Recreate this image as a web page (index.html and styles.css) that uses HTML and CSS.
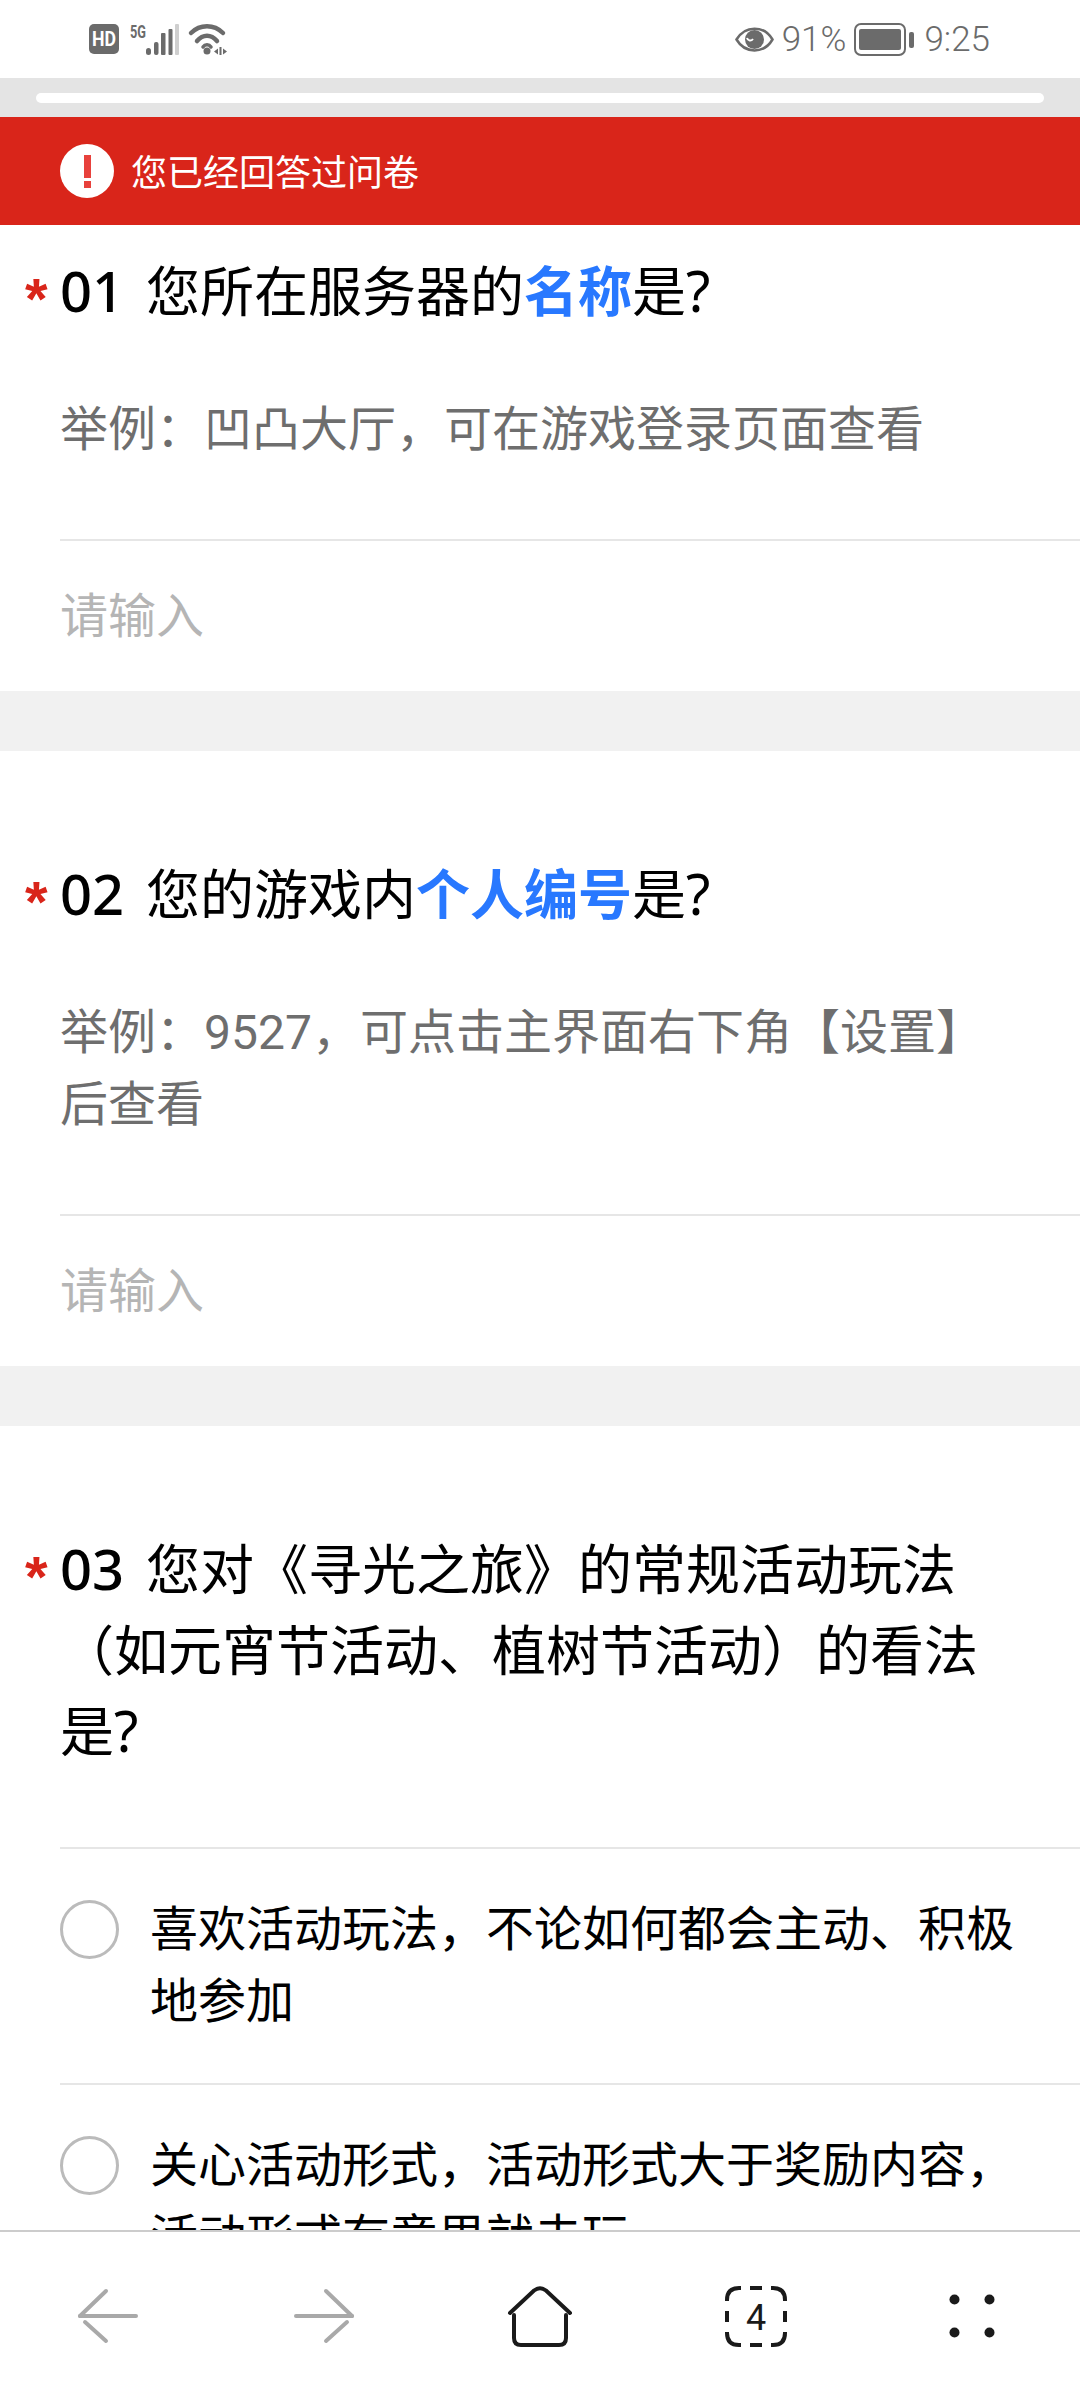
FILE: index.html
```html
<!DOCTYPE html>
<html lang="zh-CN">
  <head>
    <meta charset="UTF-8" />
    <meta name="viewport" content="width=device-width, initial-scale=1.0" />
    <title>问卷</title>
    <link rel="stylesheet" href="styles.css">
  </head>
  <body>
    <div class="phone">
      <div class="status-bar">
        <div class="status-left">
          <svg class="ic-hd" viewBox="0 0 30 30"><rect width="30" height="30" rx="5" fill="#6b6b6b"/><text x="15" y="22" text-anchor="middle" font-size="20" font-weight="700" fill="#fff" textLength="24" lengthAdjust="spacingAndGlyphs">HD</text></svg>
          <svg class="ic-signal" viewBox="0 0 49 31">
            <text x="0" y="14" font-size="18" font-weight="700" fill="#6b6b6b" textLength="16" lengthAdjust="spacingAndGlyphs">5G</text>
            <rect x="16" y="24" width="5" height="7" rx="2.5" fill="#6b6b6b"/>
            <rect x="24" y="18" width="4.5" height="13" rx="2" fill="#6b6b6b"/>
            <rect x="31" y="9" width="4.5" height="22" rx="1" fill="#6b6b6b"/>
            <rect x="38.5" y="5" width="4" height="26" rx="1" fill="#6b6b6b"/>
            <rect x="45" y="0" width="4" height="31" rx="1" fill="#cfcfcf"/>
          </svg>
          <svg class="ic-wifi" viewBox="0 0 38 32" fill="none" stroke="#6b6b6b" stroke-width="4.500" stroke-linecap="round">
            <path d="M2 10C11 1 25 1 34 10"/>
            <path d="M8 18C14 11 22 11 28 18"/>
            <path d="M14 24C16 21 20 21 22 24" stroke-width="3.500"/>
            <circle cx="18" cy="28" r="3.500" fill="#6b6b6b" stroke="none"/>
            <path d="M25 28.500L29 25.500V31.500Z M34 25.500L38 28.500L34 31.500Z" fill="#6b6b6b" stroke="none"/>
            <rect x="30.500" y="24" width="2" height="8" fill="#6b6b6b" stroke="none"/>
          </svg>
        </div>
        <div class="status-right">
          <svg class="ic-eye" viewBox="0 0 39 27"><path d="M1.500 13.500C10 -1 29 -1 37.500 13.500C29 28 10 28 1.500 13.500Z" fill="none" stroke="#6b6b6b" stroke-width="2.500"/><circle cx="19.500" cy="13.500" r="9.500" fill="#6b6b6b"/><path d="M12 12C13 15 16 15.500 18 13" fill="none" stroke="#fff" stroke-width="2"/></svg>
          <span class="status-text pct">91%</span>
          <svg class="ic-battery" viewBox="0 0 60 33"><rect x="1" y="1" width="50" height="31" rx="6" fill="none" stroke="#6b6b6b" stroke-width="2"/><rect x="5" y="6" width="42" height="21" rx="2" fill="#6b6b6b"/><rect x="55" y="9" width="5" height="16" rx="2" fill="#6b6b6b"/></svg>
          <span class="status-text">9:25</span>
        </div>
      </div>

      <div class="address-band"><div class="address-bar"></div></div>

      <div class="notice">
        <span class="notice-icon"></span>
        <span class="notice-text">您已经回答过问卷</span>
      </div>

      <div class="content">
        <section class="question first">
          <h2 class="q-title"><span class="star">*</span><span class="q-text"><span class="num">01</span>您所在服务器的<b>名称</b>是<span class="mark">?</span></span></h2>
          <p class="hint">举例：凹凸大厅，可在游戏登录页面查看</p>
          <div class="answer"><input type="text" placeholder="请输入" /></div>
        </section>

        <section class="question">
          <h2 class="q-title"><span class="star">*</span><span class="q-text"><span class="num">02</span>您的游戏内<b>个人编号</b>是<span class="mark">?</span></span></h2>
          <p class="hint">举例：9527，可点击主界面右下角【设置】后查看</p>
          <div class="answer"><input type="text" placeholder="请输入" /></div>
        </section>

        <section class="question">
          <h2 class="q-title"><span class="star">*</span><span class="q-text"><span class="num">03</span>您对《寻光之旅》的常规活动玩法（如元宵节活动、植树节活动）的看法是<span class="mark">?</span></span></h2>
          <div class="options">
            <div class="option"><span class="radio"></span><span class="option-text">喜欢活动玩法，不论如何都会主动、积极地参加</span></div>
            <div class="option"><span class="radio"></span><span class="option-text">关心活动形式，活动形式大于奖励内容，活动形式有意思就去玩</span></div>
          </div>
        </section>
      </div>

      <nav class="bottom-nav">
        <div class="nav-item">
          <svg class="ic-arrow" viewBox="0 0 60 54" fill="none" stroke="#a9a9a9" stroke-width="4" stroke-linecap="round"><path d="M2 27H58"/><path d="M2 27L28 2"/><path d="M7 33L28 52"/></svg>
        </div>
        <div class="nav-item">
          <svg class="ic-arrow" viewBox="0 0 60 54" fill="none" stroke="#a9a9a9" stroke-width="4" stroke-linecap="round"><path d="M58 27H2"/><path d="M58 27L32 2"/><path d="M53 33L32 52"/></svg>
        </div>
        <div class="nav-item">
          <svg class="ic-home" viewBox="0 0 64 61" fill="none" stroke="#1a1a1a" stroke-width="4" stroke-linecap="round"><path d="M2 27L26 4.500Q32 0 38 4.500L62 27"/><path d="M6 29V52Q6 59 13 59H51Q58 59 58 52V29"/></svg>
        </div>
        <div class="nav-item">
          <svg class="ic-tabs" viewBox="0 0 62 61" fill="none" stroke="#1a1a1a" stroke-width="4">
            <path d="M2 15V14Q2 2 14 2H16"/><path d="M46 2H48Q60 2 60 14V15"/>
            <path d="M2 46V47Q2 59 14 59H16"/><path d="M46 59H48Q60 59 60 47V46"/>
            <path d="M25 2H37"/><path d="M25 59H37"/><path d="M2 25V36"/><path d="M60 25V36"/>
            <text x="31" y="43.500" text-anchor="middle" font-size="36" fill="#1a1a1a" stroke="none">4</text>
          </svg>
        </div>
        <div class="nav-item">
          <svg class="ic-menu" viewBox="0 0 46 44" fill="#1a1a1a"><circle cx="5.500" cy="5.500" r="5"/><circle cx="40.500" cy="5.500" r="5"/><circle cx="5.500" cy="38.500" r="5"/><circle cx="40.500" cy="38.500" r="5"/></svg>
        </div>
      </nav>
    </div>
  </body>
</html>
```

FILE: styles.css
```css
* {
  box-sizing: border-box;
}

body {
  margin: 0;
  background-color: #fff;
  font-family: Roboto, "Noto Sans CJK SC", sans-serif;
}

svg {
  overflow: visible;
}

svg text {
  font-family: Roboto, sans-serif;
}

.phone {
  width: 1080px;
  height: 2400px;
  display: flex;
  flex-direction: column;
  overflow: hidden;
}

.status-bar {
  height: 78px;
  flex: none;
  padding: 0 90px 0 89px;
  display: flex;
  align-items: center;
  justify-content: space-between;
  color: #6b6b6b;
}

.status-left, .status-right {
  display: flex;
  align-items: center;
}

.ic-hd {
  width: 30px;
  height: 30px;
}

.ic-signal {
  width: 49px;
  height: 31px;
  margin-left: 11px;
}

.ic-wifi {
  width: 38px;
  height: 32px;
  margin-left: 10px;
}

.ic-eye {
  width: 39px;
  height: 27px;
}

.ic-battery {
  width: 60px;
  height: 33px;
  margin-right: 10px;
}

.status-text {
  font-size: 35px;
  font-weight: 300;
}

.pct {
  margin: 0 8px;
}

.address-band {
  height: 39px;
  flex: none;
  padding: 15px 36px 0;
  background-color: #e4e4e4;
}

.address-bar {
  height: 10px;
  background-color: #fff;
  border-radius: 5px;
}

.notice {
  height: 108px;
  flex: none;
  padding-left: 60px;
  display: flex;
  align-items: center;
  gap: 17px;
  background-color: #d9251a;
  color: #fff;
  font-size: 36px;
}

.notice-text {
  padding-bottom: 3px;
}

.notice-icon {
  width: 54px;
  height: 54px;
  border-radius: 50%;
  background-color: #fff;
  display: flex;
  flex-direction: column;
  align-items: center;
  padding-top: 11px;
}

.notice-icon::before {
  content: "";
  width: 7px;
  height: 23px;
  background-color: #e8413c;
}

.notice-icon::after {
  content: "";
  width: 7px;
  height: 7px;
  margin-top: 3px;
  background-color: #e8413c;
}

.content {
  flex: 1;
  min-height: 0;
  overflow: hidden;
}

.question {
  padding-top: 105px;
  border-bottom: 60px solid #f1f1f1;
}

.question.first {
  padding-top: 28px;
}

.q-title {
  margin: 0;
  padding: 0 60px 0 25px;
  display: flex;
  font-size: 54px;
  font-weight: 400;
  line-height: 81px;
  color: #000;
}

.star {
  width: 35px;
  height: 81px;
  flex: none;
  padding-top: 5px;
  color: #d9251a;
  font-family: "Liberation Sans", sans-serif;
  font-size: 58px;
  font-weight: 700;
}

.num {
  display: inline-block;
  width: 86px;
  font-family: "Noto Sans", sans-serif;
  font-size: 56px;
  font-weight: 500;
  line-height: 1;
}

.mark {
  font-family: "Noto Sans", sans-serif;
  font-size: 56px;
  line-height: 1;
}

.q-title b {
  color: #2878ff;
  font-weight: 700;
}

.hint {
  margin: 60px 0 0;
  padding: 0 60px;
  font-size: 48px;
  line-height: 72px;
  color: #6e6e6e;
}

.answer {
  margin: 73px 0 0 60px;
  height: 152px;
  border-top: 2px solid #e6e6e6;
  display: flex;
  align-items: center;
}

.answer input {
  width: 100%;
  padding: 0;
  border: 0;
  outline: 0;
  font: inherit;
  font-size: 48px;
  background: transparent;
}

.answer input::placeholder {
  color: #b5b5b5;
  opacity: 1;
}

.options {
  margin: 73px 0 0 60px;
}

.option {
  padding: 45px 60px 45px 0;
  border-top: 2px solid #e6e6e6;
  display: flex;
  font-size: 48px;
  line-height: 72px;
  color: #000;
}

.radio {
  width: 59px;
  height: 59px;
  flex: none;
  margin: 6px 31px 0 0;
  border: 3px solid #bbb;
  border-radius: 50%;
}

.bottom-nav {
  height: 170px;
  flex: none;
  background-color: #fff;
  border-top: 2px solid #ccc;
  display: flex;
  align-items: center;
}

.nav-item {
  flex: 1;
  display: flex;
  justify-content: center;
}

.ic-arrow {
  width: 60px;
  height: 54px;
}

.ic-home {
  width: 64px;
  height: 61px;
}

.ic-tabs {
  width: 62px;
  height: 61px;
}

.ic-menu {
  width: 46px;
  height: 44px;
}
```
